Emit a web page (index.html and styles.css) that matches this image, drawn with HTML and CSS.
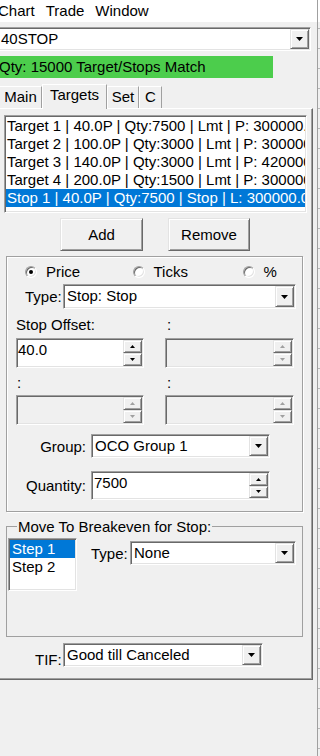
FILE: index.html
```html
<!DOCTYPE html>
<html lang="en">
<head>
<meta charset="utf-8">
<title>Order Targets</title>
<link rel="stylesheet" href="styles.css">
</head>
<body>
<div class="app">
  <div class="left">
    <div class="menubar"><span class="mi">Chart</span><span class="mi">Trade</span><span class="mi">Window</span></div>
    <div class="content">
      <div class="combo sunken top-combo">
        <span class="cv">40STOP</span>
        <span class="dd raised"><svg width="7" height="4" viewBox="0 0 7 4"><path d="M0 0h7L3.5 4z"/></svg></span>
      </div>
      <div class="status"><span class="status-text">Qty: 15000 Target/Stops Match</span></div>
      <div class="tabs">
        <div class="tab t-main">Main</div>
        <div class="tab t-targets sel">Targets</div>
        <div class="tab t-set">Set</div>
        <div class="tab t-c">C</div>
      </div>
      <div class="panel">
        <div class="list sunken targets-list">
          <div class="row">Target 1 | 40.0P | Qty:7500 | Lmt | P: 300000.00000</div>
          <div class="row">Target 2 | 100.0P | Qty:3000 | Lmt | P: 300000.00000</div>
          <div class="row">Target 3 | 140.0P | Qty:3000 | Lmt | P: 420000.00000</div>
          <div class="row">Target 4 | 200.0P | Qty:1500 | Lmt | P: 300000.00000</div>
          <div class="row sel">Stop 1 | 40.0P | Qty:7500 | Stop | L: 300000.00000</div>
        </div>
        <div class="btnrow">
          <button class="btn raised b-add">Add</button>
          <button class="btn raised b-remove">Remove</button>
        </div>
        <div class="grp g1">
          <div class="radios">
            <div class="radio r1"><span class="rb on"></span><span>Price</span></div>
            <div class="radio r2"><span class="rb"></span><span>Ticks</span></div>
            <div class="radio r3"><span class="rb"></span><span>%</span></div>
          </div>
          <div class="typerow">
            <span class="lbl type-lbl">Type:</span>
            <div class="combo sunken type-combo">
              <span class="cv">Stop: Stop</span>
              <span class="dd raised"><svg width="7" height="4" viewBox="0 0 7 4"><path d="M0 0h7L3.5 4z"/></svg></span>
            </div>
          </div>
          <div class="ogrid">
            <div class="olbl">Stop Offset:</div>
            <div class="olbl c2">:</div>
            <div class="spin sunken">
              <span class="sv">40.0</span>
              <span class="arrows">
                <span class="arr raised"><svg width="5" height="3" viewBox="0 0 5 3"><path d="M0 3h5L2.5 0z"/></svg></span>
                <span class="arr raised"><svg width="5" height="3" viewBox="0 0 5 3"><path d="M0 0h5L2.5 3z"/></svg></span>
              </span>
            </div>
            <div class="spin sunken dis">
              <span class="sv"></span>
              <span class="arrows">
                <span class="arr raised"><svg width="5" height="3" viewBox="0 0 5 3"><path d="M0 3h5L2.5 0z"/></svg></span>
                <span class="arr raised"><svg width="5" height="3" viewBox="0 0 5 3"><path d="M0 0h5L2.5 3z"/></svg></span>
              </span>
            </div>
            <div class="olbl second c1b">:</div>
            <div class="olbl second c2">:</div>
            <div class="spin sunken dis second">
              <span class="sv"></span>
              <span class="arrows">
                <span class="arr raised"><svg width="5" height="3" viewBox="0 0 5 3"><path d="M0 3h5L2.5 0z"/></svg></span>
                <span class="arr raised"><svg width="5" height="3" viewBox="0 0 5 3"><path d="M0 0h5L2.5 3z"/></svg></span>
              </span>
            </div>
            <div class="spin sunken dis second">
              <span class="sv"></span>
              <span class="arrows">
                <span class="arr raised"><svg width="5" height="3" viewBox="0 0 5 3"><path d="M0 3h5L2.5 0z"/></svg></span>
                <span class="arr raised"><svg width="5" height="3" viewBox="0 0 5 3"><path d="M0 0h5L2.5 3z"/></svg></span>
              </span>
            </div>
          </div>
          <div class="grouprow">
            <span class="rl">Group:</span>
            <div class="combo sunken group-combo">
              <span class="cv">OCO Group 1</span>
              <span class="dd raised"><svg width="7" height="4" viewBox="0 0 7 4"><path d="M0 0h7L3.5 4z"/></svg></span>
            </div>
          </div>
          <div class="grouprow qtyrow">
            <span class="rl">Quantity:</span>
            <div class="spin sunken qty-spin">
              <span class="sv">7500</span>
              <span class="arrows">
                <span class="arr raised"><svg width="5" height="3" viewBox="0 0 5 3"><path d="M0 3h5L2.5 0z"/></svg></span>
                <span class="arr raised"><svg width="5" height="3" viewBox="0 0 5 3"><path d="M0 0h5L2.5 3z"/></svg></span>
              </span>
            </div>
          </div>
        </div>
        <fieldset class="g2">
          <legend>Move To Breakeven for Stop:</legend>
          <div class="berow">
            <div class="list sunken steps">
              <div class="srow sel">Step 1</div>
              <div class="srow">Step 2</div>
            </div>
            <div class="betype">
              <span class="lbl be-lbl">Type:</span>
              <div class="combo sunken be-combo">
                <span class="cv">None</span>
                <span class="dd raised"><svg width="7" height="4" viewBox="0 0 7 4"><path d="M0 0h7L3.5 4z"/></svg></span>
              </div>
            </div>
          </div>
        </fieldset>
        <div class="tifrow">
          <span class="lbl tif-lbl">TIF:</span>
          <div class="combo sunken tif-combo">
            <span class="cv">Good till Canceled</span>
            <span class="dd raised"><svg width="7" height="4" viewBox="0 0 7 4"><path d="M0 0h7L3.5 4z"/></svg></span>
          </div>
        </div>
      </div>
    </div>
  </div>
  <div class="strip"></div>
</div>
</body>
</html>
```

FILE: styles.css
```css
* { box-sizing: border-box; }
html, body { margin: 0; padding: 0; }
body {
  background: #f0f0f0;
  font-family: "Liberation Sans", Arial, sans-serif;
  font-size: 15px;
  line-height: 17px;
  color: #000;
  overflow: hidden;
}
.app { display: flex; height: 756px; }
.left { width: 317px; flex: none; }
.strip {
  flex: 1;
  border-left: 1px solid #a0a0a0;
  background:
    linear-gradient(#fff, #fff) top / 100% 22px no-repeat,
    repeating-linear-gradient(to bottom, #f0f0f0 0 8px, #b9b9b9 8px 9px, #f0f0f0 9px 20px);
}

/* menu */
.menubar { height: 22px; background: #fff; display: flex; gap: 11px; padding-top: 2px; white-space: nowrap; }
.mi:first-child { margin-left: -2px; }

.content { padding-top: 5px; }

/* 3D edges */
.sunken {
  border: 1px solid;
  border-color: #a0a0a0 #fff #fff #a0a0a0;
  box-shadow: inset 1px 1px 0 #696969, inset -1px -1px 0 #e3e3e3;
  padding: 1px;
}
.raised {
  border: 1px solid;
  border-color: #e3e3e3 #696969 #696969 #e3e3e3;
  box-shadow: inset 1px 1px 0 #fff, inset -1px -1px 0 #a0a0a0;
  background: #f0f0f0;
}

/* combo */
.combo { display: flex; background: #fff; }
.cv { flex: 1; padding-left: 2px; line-height: 19px; white-space: nowrap; overflow: hidden; }
.dd { width: 19px; flex: none; display: flex; align-items: center; justify-content: center; }
.dd svg { fill: #000; }
.top-combo { margin-left: -3px; width: 314px; height: 24px; }
.top-combo .cv { line-height: 20px; }

/* status */
.status { margin-top: 5px; width: 273px; height: 22px; background: #4ccd4c; line-height: 22px; white-space: nowrap; overflow: hidden; }
.status-text { margin-left: -1px; }

/* tabs */
.tabs { display: flex; align-items: flex-end; height: 24px; margin-top: 6px; margin-left: -1px; }
.tab {
  height: 22px;
  padding-top: 1px;
  text-align: center;
  border-top: 1px solid #fff;
  border-left: 1px solid #fff;
  border-right: 1px solid #a0a0a0;
  background: #f0f0f0;
  white-space: nowrap;
}
.tab.sel { height: 25px; margin-bottom: -1px; position: relative; z-index: 1; }
.t-main { width: 43px; }
.t-targets { width: 65px; }
.t-set { width: 32px; }
.t-c { width: 23px; }

/* panel */
.panel {
  margin-left: -2px;
  width: 315px;
  border-top: 1px solid #fff;
  border-left: 1px solid #fff;
  border-right: 1px solid #696969;
  border-bottom: 1px solid #696969;
  box-shadow: inset -1px -1px 0 #a0a0a0;
  padding: 6px 0 12px 0;
}

/* lists */
.list { background: #fff; overflow: hidden; }
.targets-list { margin-left: 5px; width: 303px; height: 98px; }
.row { height: 18px; line-height: 18px; padding-left: 1px; white-space: nowrap; overflow: hidden; }
.row.sel, .srow.sel { background: #0078d7; color: #fff; }

/* buttons */
.btnrow { display: flex; gap: 25px; margin: 5px 0 0 61px; }
.btn {
  height: 33px;
  font: inherit;
  color: #000;
  padding: 0;
  display: flex;
  align-items: center;
  justify-content: center;
}
.b-add { width: 83px; }
.b-remove { width: 82px; }

/* group boxes */
.grp { border: 1px solid #a0a0a0; box-shadow: inset 1px 1px 0 #fff, 1px 1px 0 #fff; }
.g1 { margin: 5px 0 0 7px; width: 297px; padding: 6px 0 11px 0; }

.radios { display: flex; padding-left: 18px; height: 17px; }
.radio { display: flex; align-items: center; gap: 9px; }
.r1 { width: 107.5px; }
.r2 { width: 110px; }
.rb {
  width: 12px; height: 12px; border-radius: 50%;
  background: #fff;
  border: 1px solid;
  border-color: #a0a0a0 #fff #fff #a0a0a0;
  box-shadow: inset 1px 1px 0 #696969, inset -1px -1px 0 #e3e3e3;
  display: flex; align-items: center; justify-content: center;
}
.rb.on::after { content: ""; width: 4px; height: 4px; border-radius: 50%; background: #000; }

.typerow { display: flex; align-items: center; margin-top: 4px; padding-left: 18px; }
.type-lbl { width: 38px; }
.type-combo { width: 233px; height: 25px; }

.ogrid { display: grid; grid-template-columns: 128px 129px; column-gap: 21px; margin: 7px 0 0 9px; }
.olbl { height: 17px; white-space: nowrap; }
.olbl.c2 { padding-left: 2px; }
.olbl.c1b { padding-left: 1px; }
.olbl.second { margin-top: 6px; }
.spin { display: flex; background: #fff; height: 30px; margin-top: 5px; }
.spin.second { margin-top: 4px; }
.spin.dis { background: #f0f0f0; }
.sv { flex: 1; padding: 1px 0 0 0; line-height: 17px; white-space: nowrap; }
.arrows { width: 19px; flex: none; display: flex; flex-direction: column; }
.arr { flex: 1; display: flex; align-items: center; justify-content: center; }
.arr svg { fill: #000; }
.spin.dis .arr svg { fill: #a0a0a0; }

.grouprow { display: flex; align-items: center; margin-top: 9px; }
.rl { width: 79px; text-align: right; }
.group-combo { margin-left: 5px; width: 179px; height: 24px; }
.qtyrow { margin-top: 13px; }
.qty-spin { margin: 0 0 0 5px; width: 179px; height: 29px; }
.qty-spin .sv { padding-left: 1px; }

/* breakeven */
.g2 {
  margin: 6px 0 0 7px;
  width: 297px;
  min-width: 0;
  padding: 0 0 45px 0;
  border: 1px solid #a0a0a0;
}
.g2 legend { margin-left: 10px; padding: 0 1px; line-height: 17px; }
.berow { display: flex; align-items: flex-start; padding: 3px 0 0 1px; }
.steps { width: 69px; height: 53px; }
.srow { height: 18px; line-height: 18px; padding-left: 2px; white-space: nowrap; }
.betype { display: flex; align-items: center; margin: 3px 0 0 14px; }
.be-lbl { width: 39px; }
.be-combo { width: 166px; height: 24px; }

/* TIF */
.tifrow { display: flex; margin: 6px 0 0 36px; }
.tif-lbl { width: 28px; align-self: flex-end; margin-bottom: -1px; }
.tif-combo { width: 200px; height: 24px; }
```
